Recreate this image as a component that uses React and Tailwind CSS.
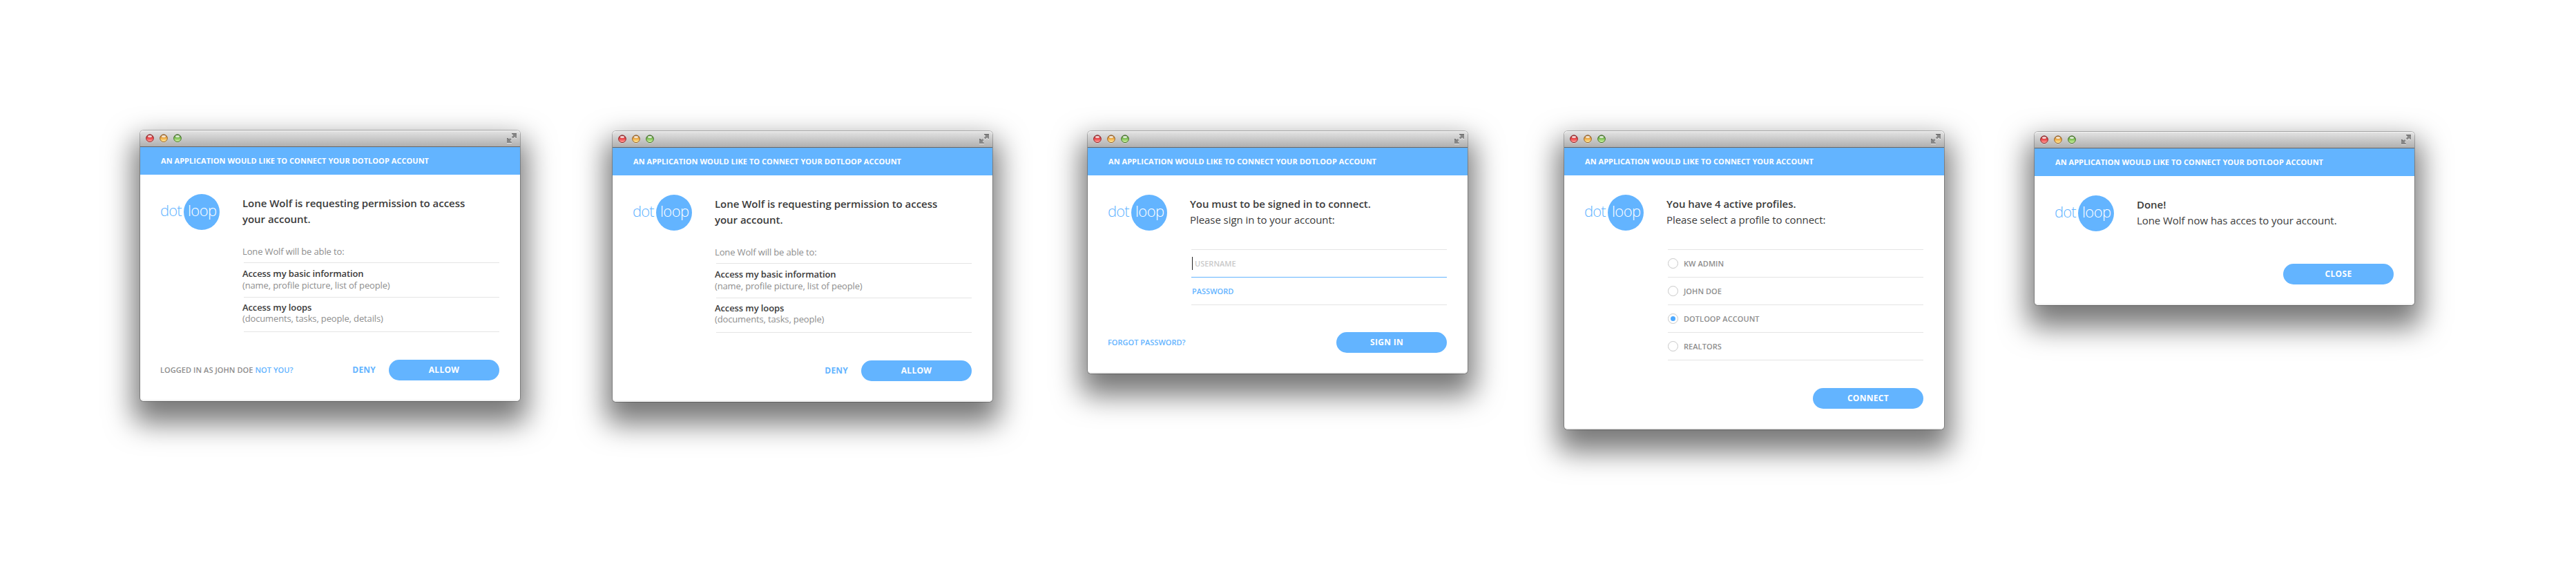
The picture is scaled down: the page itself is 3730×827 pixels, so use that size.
function TrafficLight({ edge, from, to }) {
  return (
    <svg width="12" height="13" viewBox="0 0 12 13" className="block shrink-0">
      <defs>
        <linearGradient id={"g" + edge.slice(1)} x1="0" y1="0" x2="0" y2="1">
          <stop offset="0" stopColor={edge} />
          <stop offset="0.5" stopColor={from} />
          <stop offset="1" stopColor={to} />
        </linearGradient>
      </defs>
      <circle cx="6" cy="7" r="5.7" fill="#ffffff" opacity="0.55" />
      <circle cx="6" cy="6.2" r="5.4" fill={"url(#g" + edge.slice(1) + ")"} stroke={edge} strokeWidth="1" />
      <ellipse cx="6" cy="3.4" rx="3" ry="1.7" fill="#ffffff" opacity="0.75" />
    </svg>
  );
}

function ExpandIcon() {
  return (
    <svg width="15" height="15" viewBox="0 0 15 15" className="block shrink-0">
      <g fill="#ffffff" opacity="0.6" transform="translate(0 1)">
        <path d="M7 0h7v7h-1l-1.8-1.8L8.8 7.4 6.8 5.4 9.2 3 7 1z" />
        <path d="M0 7h1l1.8 1.8L4.6 7l2 2-2 2L7 13v1H0z" />
      </g>
      <g fill="#868686">
        <path d="M7 0h7v7h-1l-1.8-1.8L8.8 7.4 6.8 5.4 9.2 3 7 1z" />
        <path d="M0 7h1l1.8 1.8L4.6 7l2 2-2 2L7 13v1H0z" />
      </g>
      <path d="M7 0h7v1H7zM0 7h1.2l1.8 1.8v1L1 8H0z" fill="#666666" />
    </svg>
  );
}

function Logo() {
  return (
    <div className="flex h-[52px] w-[86px] shrink-0 text-[22px] font-light leading-[46px]">
      <span className="-ml-px w-[34px] shrink-0 tracking-[-0.9px] text-[#63b4ff]">dot</span>
      <span className="size-[52px] shrink-0 rounded-full bg-[#63b4ff] pl-1.5 tracking-[-0.6px] text-white">
        loop
      </span>
    </div>
  );
}

function PillButton({ children, className = "" }) {
  return (
    <button
      className={
        "flex h-[30px] w-40 items-center justify-center rounded-full bg-[#63b4ff] pb-px text-xs font-bold leading-[29px] tracking-[0.3px] text-white " +
        className
      }
    >
      {children}
    </button>
  );
}

function Window({ className, banner = "AN APPLICATION WOULD LIKE TO CONNECT YOUR DOTLOOP ACCOUNT", body, footer, gap }) {
  return (
    <section
      className={
        "flex w-[550px] shrink-0 flex-col rounded-[5px] bg-white shadow-[0_0_0_1px_rgba(0,0,0,0.25),0_22px_40px_10px_rgba(0,0,0,0.53)] " +
        className
      }
    >
      <div className="flex h-6 items-center justify-between rounded-t-[5px] border-b border-[#666666] bg-linear-to-b from-[#e4e4e4] to-[#b0b0b0] pl-2 pr-1 shadow-[inset_0_1px_0_#f4f4f4]">
        <div className="flex gap-2">
          <TrafficLight edge="#8c2b2c" from="#ee4a4c" to="#ffa9a4" />
          <TrafficLight edge="#93602a" from="#f2b04a" to="#fff0a0" />
          <TrafficLight edge="#456f2c" from="#86c65c" to="#d4f5a8" />
        </div>
        <ExpandIcon />
      </div>
      <header className="h-10 bg-[#63b4ff] pl-[30px] text-[11px] font-bold leading-10 tracking-[0.04px] text-white">
        {banner}
      </header>
      <div className="flex px-[30px] pt-7">
        <Logo />
        <div className="flex-1 pl-[34px] pt-0.5">{body}</div>
      </div>
      <footer className={"flex items-center justify-between rounded-b-[5px] border-b-2 border-[#f0f0f0] pb-7 pl-[29px] pr-[30px] " + gap}>
        {footer}
      </footer>
    </section>
  );
}

function Heading({ title, text }) {
  return (
    <div className="-ml-0.5 text-[15px] leading-[23px] tracking-[-0.06px] text-[#3b3b3b]">
      <h1 className="font-semibold tracking-[-0.03px]">{title}</h1>
      {text && <p>{text}</p>}
    </div>
  );
}

function Permissions({ scope }) {
  return (
    <>
      <Heading
        title={
          <>
            Lone Wolf is requesting permission to access
            <br />
            your account.
          </>
        }
      />
      <div className="mt-[26px] text-[13px] leading-[18px] tracking-[-0.14px] text-[#8e8e8e]">
        <div className="h-[26px] border-b border-[#e4e4e4]">
          <p className="-ml-0.5">Lone Wolf will be able to:</p>
        </div>
        <div className="h-[50px] border-b border-[#e4e4e4] pt-1.5">
          <h2 className="-ml-0.5 h-[17px] font-semibold tracking-[-0.1px] text-[#3b3b3b]">Access my basic information</h2>
          <p className="-ml-0.5">(name, profile picture, list of people)</p>
        </div>
        <div className="h-[50px] border-b border-[#e4e4e4] pt-[5px]">
          <h2 className="-ml-0.5 h-4 font-semibold tracking-[-0.1px] text-[#3b3b3b]">Access my loops</h2>
          <p className="-ml-0.5">{scope}</p>
        </div>
      </div>
    </>
  );
}

function Decision({ children }) {
  return (
    <>
      <p className="pb-px text-[11px] font-semibold leading-[29px] tracking-[0.06px] text-[#8e8e8e]">{children}</p>
      <div className="flex items-center gap-[19px]">
        <button className="pb-px text-xs font-bold leading-[29px] tracking-[0.2px] text-[#63b4ff]">DENY</button>
        <PillButton>ALLOW</PillButton>
      </div>
    </>
  );
}

function Radio({ checked, label }) {
  return (
    <li className="flex h-10 items-center gap-2 border-b border-[#e4e4e4]">
      <span className="flex size-[15px] items-center justify-center rounded-full border border-[#c8c8c8]">
        {checked && <span className="size-[7px] rounded-full bg-[#4aa8ff]" />}
      </span>
      <span className="tracking-[0.06px]">{label}</span>
    </li>
  );
}

export default function App() {
  return (
    <main className="flex h-[827px] w-[3730px] items-start overflow-hidden bg-white pl-[203px] pt-[189px] font-['Open_Sans',sans-serif]">
      <Window
        className=""
        body={<Permissions scope="(documents, tasks, people, details)" />}
        gap="pt-10"
        footer={
          <Decision>
            LOGGED IN AS JOHN DOE <a className="text-[#63b4ff]">NOT YOU?</a>
          </Decision>
        }
      />
      <Window
        className="ml-[134px] mt-px"
        body={<Permissions scope="(documents, tasks, people)" />}
        gap="pt-10"
        footer={<Decision />}
      />
      <Window
        className="ml-[138px] mt-px"
        body={
          <>
            <Heading title="You must to be signed in to connect." text="Please sign in to your account:" />
            <div className="mt-[31px] border-t border-[#e4e4e4] text-[11px] font-semibold leading-[15px]">
              <div className="flex h-10 items-center border-b border-[#63b4ff] pl-px">
                <span className="h-[19px] w-px bg-[#222222]" />
                <span className="pl-[3px] text-[#cacaca]">USERNAME</span>
              </div>
              <div className="flex h-10 items-center border-b border-[#e4e4e4] pl-px text-[#63b4ff]">PASSWORD</div>
            </div>
          </>
        }
        gap="pt-[39px]"
        footer={
          <>
            <a className="pb-px text-[11px] font-semibold leading-[29px] text-[#63b4ff]">FORGOT PASSWORD?</a>
            <PillButton className="pr-3.5">SIGN IN</PillButton>
          </>
        }
      />
      <Window
        className="ml-[140px] mt-px"
        banner="AN APPLICATION WOULD LIKE TO CONNECT YOUR ACCOUNT"
        body={
          <>
            <Heading title="You have 4 active profiles." text="Please select a profile to connect:" />
            <ul className="mt-[31px] border-t border-[#e4e4e4] text-[11px] font-semibold leading-[15px] text-[#8e8e8e]">
              <Radio label="KW ADMIN" />
              <Radio label="JOHN DOE" />
              <Radio label="DOTLOOP ACCOUNT" checked />
              <Radio label="REALTORS" />
            </ul>
          </>
        }
        gap="pt-10"
        footer={
          <>
            <span />
            <PillButton>CONNECT</PillButton>
          </>
        }
      />
      <Window
        className="ml-[131px] mt-0.5"
        body={<Heading title="Done!" text="Lone Wolf now has acces to your account." />}
        gap="pt-[47px]"
        footer={
          <>
            <span />
            <PillButton>CLOSE</PillButton>
          </>
        }
      />
    </main>
  );
}
